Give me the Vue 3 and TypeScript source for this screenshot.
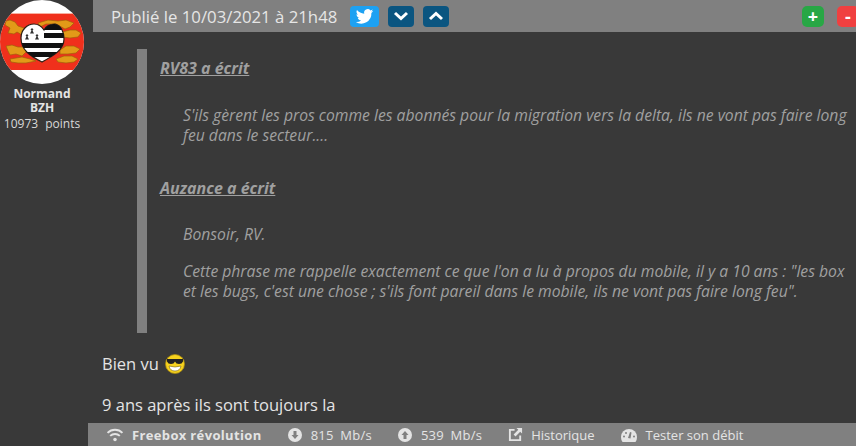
<script setup lang="ts">
const stats = [
  { icon: "down", label: "815 Mb/s" },
  { icon: "up", label: "539 Mb/s" },
];
</script>

<template>
  <div class="page">
    <div class="post">
      <aside class="author">
        <svg class="avatar" viewBox="0 0 84 84" width="84" height="84">
          <defs>
            <clipPath id="round"><circle cx="42" cy="42" r="42" /></clipPath>
            <clipPath id="heart">
              <path d="M42 62 C30 56 21 50 21 38 C21 30 27 24 34 24 C38 24 42 27 44 30 C46 26 50 24 55 24 C61 25 64 32 64 39 C64 50 53 56 42 62 Z" />
            </clipPath>
          </defs>
          <g clip-path="url(#round)">
            <rect width="84" height="84" fill="#fff" />
            <rect y="13" width="84" height="57" fill="#f0301c" />
            <rect y="13" width="84" height="1" fill="#f8b0a0" />
            <g fill="#e29a18" stroke="#a0600c" stroke-width="0.7">
              <path d="M6 21 L10 20 L15 22 L18 26 L24 28 L27 33 L22 35 L17 32 L14 34 L8 33 L10 28 L5 25 Z" />
              <path d="M6 46 L12 45 L18 47 L24 47 L27 51 L22 56 L16 54 L10 55 L8 51 Z" />
              <path d="M10 59 L22 57 L30 59 L36 61 L26 63 L18 63 L11 62 Z" />
              <path d="M38 23 L48 20 L58 21 L66 20 L74 23 L70 27 L65 29 L56 24 L46 24 L40 27 Z" />
              <path d="M62 32 L70 30 L76 30 L81 33 L78 37 L70 38 L62 37 Z" />
              <path d="M60 50 L66 46 L74 46 L80 49 L76 53 L68 54 L60 54 Z" />
              <path d="M56 59 L64 56 L72 56 L78 59 L74 62 L66 63 L58 62 Z" />
            </g>
            <path d="M42 62 C30 56 21 50 21 38 C21 30 27 24 34 24 C38 24 42 27 44 30 C46 26 50 24 55 24 C61 25 64 32 64 39 C64 50 53 56 42 62 Z" fill="#fff" stroke="#2c2016" stroke-width="1.2" />
            <g clip-path="url(#heart)" fill="#111">
              <rect x="44" y="24" width="21" height="6" />
              <rect x="44" y="33" width="21" height="5" />
              <rect x="21" y="43" width="44" height="5" />
              <rect x="21" y="52" width="44" height="5" />
            </g>
            <g fill="#333">
              <path d="M32 28 l1.500 1.500 -1 1 1.500 3 h-4 l1.500-3 -1-1 z" />
              <path d="M27 34 l1.500 1.500 -1 1 1.500 3 h-4 l1.500-3 -1-1 z" />
              <path d="M37 34 l1.500 1.500 -1 1 1.500 3 h-4 l1.500-3 -1-1 z" />
            </g>
          </g>
        </svg>
        <div class="name">Normand<br />BZH</div>
        <div class="points">10973 points</div>
      </aside>

      <main class="body">
        <header class="head">
          <span class="date">Publié le 10/03/2021 à 21h48</span>
          <button class="btn twitter" type="button">
            <svg viewBox="0 0 24 24" width="23" height="19">
              <path fill="#fff" d="M23 5.100c-.8.4-1.700.6-2.600.7.9-.6 1.600-1.400 2-2.500-.9.5-1.800.9-2.900 1.100a4.500 4.500 0 0 0-7.800 4.100C8 8.300 4.700 6.500 2.500 3.800c-1.200 2-.6 4.600 1.400 6-.7 0-1.400-.2-2-.6 0 2.200 1.500 4.100 3.600 4.600-.7.2-1.400.2-2 .1.600 1.800 2.300 3.100 4.200 3.100A9.100 9.100 0 0 1 1 18.900 12.800 12.800 0 0 0 20.700 7.500c.9-.6 1.700-1.400 2.300-2.400z" />
            </svg>
          </button>
          <button class="btn nav" type="button">
            <svg viewBox="0 0 16 10" width="16" height="10"><path d="M2 2l6 5.500L14 2" fill="none" stroke="#fff" stroke-width="3" /></svg>
          </button>
          <button class="btn nav" type="button">
            <svg viewBox="0 0 16 10" width="16" height="10"><path d="M2 8l6-5.500L14 8" fill="none" stroke="#fff" stroke-width="3" /></svg>
          </button>
          <div class="votes">
            <button class="vote plus" type="button">+</button>
            <button class="vote minus" type="button">-</button>
          </div>
        </header>

        <blockquote class="quote">
          <p class="cite">RV83 a écrit</p>
          <p class="said">S'ils gèrent les pros comme les abonnés pour la migration vers la delta, ils ne vont pas faire long feu dans le secteur....</p>
          <p class="cite second">Auzance a écrit</p>
          <p class="said hello">Bonsoir, RV.</p>
          <p class="said next">Cette phrase me rappelle exactement ce que l'on a lu à propos du mobile, il y a 10 ans : "les box et les bugs, c'est une chose ; s'ils font pareil dans le mobile, ils ne vont pas faire long feu".</p>
        </blockquote>

        <p class="line first">
          Bien vu
          <svg class="smiley" viewBox="0 0 20 20" width="20" height="20">
            <circle cx="10" cy="10" r="9.500" fill="#f6d21e" stroke="#a88a10" stroke-width="0.8" />
            <path d="M2 5h16v2.500q-1 2.500-4 2.500q-3 0-4-2.500q-1 2.500-4 2.500q-3 0-4-2.500z" fill="#222" />
            <path d="M4 12q6 2 12 0q-1 5-6 5q-5 0-6-5z" fill="#fff" stroke="#7a6410" stroke-width="0.6" />
          </svg>
        </p>
        <p class="line">9 ans après ils sont toujours la</p>
      </main>
    </div>

    <footer class="bar">
      <span class="item box">
        <svg viewBox="0 0 20 16" width="18" height="14">
          <g fill="none" stroke="#e4e4e4" stroke-width="2.200">
            <path d="M1.500 5.500a12 12 0 0 1 17 0" />
            <path d="M4.500 9a8 8 0 0 1 11 0" />
          </g>
          <circle cx="10" cy="13" r="2" fill="#e4e4e4" />
        </svg>
        <b>Freebox révolution</b>
      </span>
      <span v-for="s in stats" :key="s.icon" class="item rate">
        <svg viewBox="0 0 14 14" width="14" height="14">
          <circle cx="7" cy="7" r="7" fill="#e4e4e4" />
          <path v-if="s.icon === 'down'" d="M5.500 3h3v4h2L7 11 3.500 7h2z" fill="#808080" />
          <path v-else d="M5.500 11h3V7h2L7 3 3.500 7h2z" fill="#808080" />
        </svg>
        {{ s.label }}
      </span>
      <span class="item link">
        <svg viewBox="0 0 16 16" width="15" height="15">
          <path d="M7 3H2v11h11V9" fill="none" stroke="#e4e4e4" stroke-width="2" />
          <path d="M9 1h6v6l-2-2-5 5-2-2 5-5z" fill="#e4e4e4" />
        </svg>
        Historique
      </span>
      <span class="item speed">
        <svg viewBox="0 0 16 14" width="16" height="14">
          <path d="M0 9a8 8 0 0 1 16 0q0 3-1.500 5h-13Q0 12 0 9z" fill="#e4e4e4" />
          <path d="M7 10l2-6 1.500.4-1 6z" fill="#808080" />
          <circle cx="3" cy="8.500" r="1" fill="#808080" />
          <circle cx="5" cy="5" r="1" fill="#808080" />
          <circle cx="13" cy="8.500" r="1" fill="#808080" />
        </svg>
        Tester son débit
      </span>
    </footer>
  </div>
</template>

<style>
body {
  background: #393939;
}
</style>

<style scoped>
.page {
  width: 856px;
  height: 446px;
  display: flex;
  flex-direction: column;
  overflow: hidden;
  background: #393939;
  color: #e4e4e4;
  font-family: "Open Sans", sans-serif;
}
.post {
  flex: 1;
  min-height: 0;
  display: flex;
}
.author {
  width: 93px;
  flex: none;
  box-sizing: border-box;
  padding-right: 9px;
  text-align: center;
  font-size: 12px;
  line-height: 14px;
}
.avatar {
  display: block;
}
.name {
  margin-top: 3px;
  font-weight: 700;
}
.points {
  margin-top: 2px;
  color: #d8d8d8;
  white-space: nowrap;
  word-spacing: 4px;
}
.body {
  flex: 1;
  min-width: 0;
}
.head {
  height: 32px;
  background: #808080;
  display: flex;
  align-items: center;
  padding-left: 18px;
  gap: 9px;
}
.date {
  font-size: 16.75px;
  color: #e6e6e6;
  margin-right: 4px;
  white-space: nowrap;
}
.btn {
  height: 21px;
  width: 26px;
  padding: 0;
  border: 0;
  border-radius: 4px;
  display: flex;
  align-items: center;
  justify-content: center;
}
.twitter {
  width: 29px;
  background: #1da1f2;
}
.nav {
  background: #0b5580;
}
.votes {
  margin-left: auto;
  display: flex;
  gap: 13px;
  margin-right: -3px;
}
.vote {
  width: 22px;
  height: 21px;
  padding: 0;
  border: 0;
  border-radius: 5px;
  color: #fff;
  font-family: "Open Sans", sans-serif;
  font-size: 18px;
  font-weight: 700;
  line-height: 20px;
}
.plus {
  background: #28a745;
}
.minus {
  background: #f04040;
}
.quote {
  margin: 17px 0 0 44px;
  height: 284px;
  border-left: 10px solid #808080;
  padding-left: 13px;
  color: #a0a0a0;
  font-size: 15.7px;
  font-style: italic;
  line-height: 20px;
}
.quote p {
  margin: 0;
}
.quote .cite {
  padding-top: 9px;
  font-size: 16px;
  font-weight: 700;
  text-decoration: underline;
}
.quote .cite.second {
  padding-top: 33px;
}
.quote .said {
  padding: 27px 0 0 23px;
}
.quote .said.hello {
  padding-top: 26px;
}
.quote .said.next {
  padding-top: 17px;
}
.line {
  margin: 19px 0 0;
  padding-left: 9px;
  font-size: 16.5px;
  line-height: 22px;
  display: flex;
  align-items: center;
  gap: 6px;
  height: 22px;
}
.line.first {
  margin-top: 20px;
}
.bar {
  flex: none;
  height: 23px;
  margin-left: 88px;
  background: #808080;
  display: flex;
  align-items: center;
  padding-left: 18px;
  gap: 26px;
  font-size: 13px;
  color: #e4e4e4;
}
.item {
  display: flex;
  align-items: center;
  gap: 9px;
}
.item.box {
  gap: 8px;
}
.item.box b {
  letter-spacing: 0.35px;
}
.item.link {
  gap: 8px;
}
.item.speed {
  gap: 9px;
}
.rate {
  word-spacing: 3px;
  letter-spacing: 0.25px;
}
</style>
